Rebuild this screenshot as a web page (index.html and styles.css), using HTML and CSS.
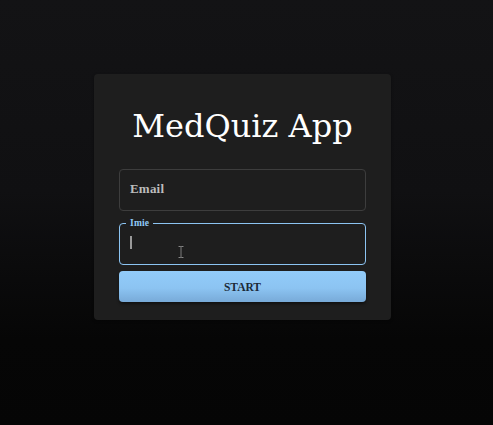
FILE: index.html
```html
<!DOCTYPE html>
<html lang="pl">
<head>
<meta charset="utf-8">
<title>MedQuiz App</title>
<link rel="stylesheet" href="styles.css">
</head>
<body>
<main class="page">
  <section class="card">
    <h1 class="title">MedQuiz App</h1>
    <form class="form">
      <div class="field field-email"><span class="placeholder">Email</span></div>
      <fieldset class="field-name">
        <legend class="legend">Imie</legend>
        <div class="name-inner">
          <span class="caret"></span>
          <svg class="ibeam" width="6" height="12" viewBox="0 0 6 12" aria-hidden="true">
            <path d="M0.5 0.5h2l0.5 0.5l0.5-0.5h2M3 1v10M0.5 11.5h2l0.5-0.5l0.5 0.5h2" fill="none" stroke="#111" stroke-width="1.6"/>
            <path d="M0.5 0.5h2l0.5 0.5l0.5-0.5h2M3 1v10M0.5 11.5h2l0.5-0.5l0.5 0.5h2" fill="none" stroke="#d8d8d8" stroke-width="0.6"/>
          </svg>
        </div>
      </fieldset>
      <button type="button" class="start">START</button>
    </form>
  </section>
</main>
</body>
</html>
```

FILE: styles.css
```css
html, body {
  margin: 0;
  padding: 0;
}
body {
  width: 493px;
  height: 425px;
  overflow: hidden;
  background: linear-gradient(180deg, #131315 0%, #101012 45%, #060606 80%, #050505 100%);
  font-family: "Liberation Serif", "DejaVu Serif", serif;
}
.page {
  box-sizing: border-box;
  height: 425px;
  padding: 74px 8px 0 0;
  display: flex;
  justify-content: center;
  align-items: flex-start;
}
.card {
  box-sizing: border-box;
  width: 297px;
  padding: 29px 25px 18px;
  background: #1e1e1e;
  border-radius: 4px;
  box-shadow: 0 1px 3px rgba(0,0,0,0.35);
}
.title {
  margin: 0 0 20px;
  font-family: "DejaVu Serif", "Liberation Serif", serif;
  font-size: 32px;
  line-height: 46px;
  font-weight: 400;
  color: #ffffff;
  text-align: center;
}
.form {
  display: flex;
  flex-direction: column;
  margin: 0;
}
.field-email {
  box-sizing: border-box;
  height: 42px;
  border: 1px solid #3d3d3d;
  border-radius: 4px;
  padding: 0 10px 3px;
  display: flex;
  align-items: center;
}
.placeholder {
  font-size: 13px;
  font-weight: 700;
  color: #bcbcbc;
  letter-spacing: 0.2px;
}
.field-name {
  margin: 7px 0 0;
  padding: 0 10px;
  min-width: 0;
  border: 1.5px solid #8cc4f2;
  border-radius: 4px;
}
.legend {
  padding: 0 4px;
  margin-left: -4px;
  font-size: 9.5px;
  line-height: 10px;
  font-weight: 700;
  color: #90caf9;
  letter-spacing: 0.2px;
}
.name-inner {
  position: relative;
  height: 36px;
}
.caret {
  position: absolute;
  left: 0;
  top: 8px;
  width: 1.5px;
  height: 13px;
  background: #9a9a9a;
}
.ibeam {
  position: absolute;
  left: 48px;
  top: 18px;
}
.start {
  margin-top: 6px;
  height: 31px;
  border: 0;
  border-radius: 4px;
  background: linear-gradient(180deg, #92cbf9 0%, #8cc4f2 55%, #78aad8 100%);
  box-shadow: 0 2px 3px rgba(0,0,0,0.45);
  font-family: "Liberation Serif", "DejaVu Serif", serif;
  font-size: 11.5px;
  font-weight: 700;
  letter-spacing: 0;
  color: #1b2a38;
  padding: 0;
}
```
